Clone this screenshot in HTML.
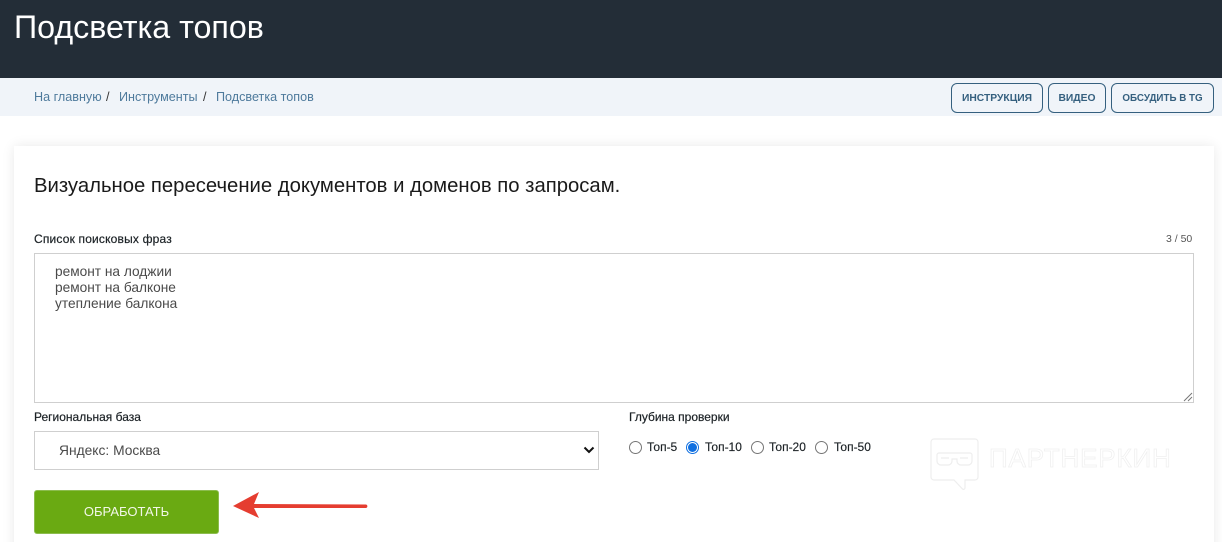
<!DOCTYPE html>
<html lang="ru"><head><meta charset="utf-8"><title>Подсветка топов</title>
<style>
*{box-sizing:border-box}
html,body{margin:0;padding:0;width:1222px;height:542px;overflow:hidden;background:#fff;font-family:"Liberation Sans",sans-serif}
#wrap{position:relative;width:1222px;height:542px;overflow:hidden}
.a{position:absolute;white-space:nowrap}
#hd{left:0;top:0;width:1222px;height:78px;background:#232d37}
#bc{left:0;top:78px;width:1222px;height:38px;background:#f0f4f9}
.bl{color:#4e7a9c;font-size:12.6px;top:90px;line-height:14px}
.btn{top:83px;height:30px;border:1px solid #35607f;border-radius:6px;color:#35607f;font-size:10.3px;font-weight:bold;text-align:center;line-height:29px;background:#f0f4f9}
#card{left:14px;top:146px;width:1200px;height:420px;background:#fff;box-shadow:0 0 12px rgba(0,0,0,.09)}
.lb{font-size:12px;color:#1c2226;line-height:14px;-webkit-text-stroke:.2px #1c2226}
.box{background:#fff;border:1px solid #cfcfcf}
.r{width:13px;height:13px;border:1px solid #767676;border-radius:50%;background:#fff;top:441px}
.rt{font-size:12px;color:#1c2226;top:440px;line-height:14px;-webkit-text-stroke:.15px #1c2226}
</style></head><body>
<div id="wrap">
<div class="a" id="hd"></div>
<div class="a" style="left:14px;top:9px;font-size:32.2px;line-height:37px;color:#fff">Подсветка топов</div>
<div class="a" id="bc"></div>
<div class="a bl" style="left:34px">На главную</div>
<div class="a bl" style="left:106px;color:#333">/</div>
<div class="a bl" style="left:119px">Инструменты</div>
<div class="a bl" style="left:203px;color:#333">/</div>
<div class="a bl" style="left:216px">Подсветка топов</div>
<div class="a btn" style="left:951px;width:92px">ИНСТРУКЦИЯ</div>
<div class="a btn" style="left:1048px;width:58px">ВИДЕО</div>
<div class="a btn" style="left:1111px;width:103px;font-size:9.8px">ОБСУДИТЬ В TG</div>
<div class="a" id="card"></div>
<div class="a" style="left:34px;top:174px;font-size:20.3px;line-height:24px;color:#1a1a1a">Визуальное пересечение документов и доменов по запросам.</div>
<div class="a lb" style="left:34px;top:232px;letter-spacing:.18px">Список поисковых фраз</div>
<div class="a" style="left:1166px;top:233px;font-size:10.5px;line-height:12px;color:#555">3 / 50</div>
<div class="a box" style="left:34px;top:253px;width:1160px;height:150px"></div>
<div class="a" style="left:55px;top:264px;font-size:13.7px;line-height:16px;color:#4a4a4a">ремонт на лоджии<br>ремонт на балконе<br>утепление балкона</div>
<svg class="a" style="left:1182px;top:391px" width="11" height="11" viewBox="0 0 11 11"><path d="M2 10 10 2M6 10 10 6" stroke="#777" stroke-width="1" fill="none"/></svg>
<div class="a lb" style="left:34px;top:410px">Региональная база</div>
<div class="a box" style="left:34px;top:431px;width:565px;height:39px"></div>
<div class="a" style="left:59px;top:443px;font-size:13.8px;line-height:16px;color:#4a4a4a">Яндекс: Москва</div>
<svg class="a" style="left:583px;top:446px" width="12" height="9" viewBox="0 0 12 9"><path d="M1.500 1.500 6 6l4.500-4.500" stroke="#111" stroke-width="2" fill="none"/></svg>
<div class="a lb" style="left:629px;top:410px">Глубина проверки</div>
<div class="a r" style="left:629px"></div>
<div class="a rt" style="left:647px">Топ-5</div>
<div class="a r" style="left:686px;border:1px solid #0f6fe0"></div>
<div class="a" style="left:688px;top:443px;width:9px;height:9px;border-radius:50%;background:#0f6fe0"></div>
<div class="a rt" style="left:705px">Топ-10</div>
<div class="a r" style="left:751px"></div>
<div class="a rt" style="left:769px">Топ-20</div>
<div class="a r" style="left:815px"></div>
<div class="a rt" style="left:834px">Топ-50</div>
<svg class="a" style="left:930px;top:438px" width="50" height="54" viewBox="0 0 50 54" fill="none" stroke="#eeeeee" stroke-width="1.200"><path d="M4 1h41a3 3 0 0 1 3 3v35a3 3 0 0 1-3 3H35v8a1.500 1.500 0 0 1-2.500 1L24 42H4a3 3 0 0 1-3-3V4a3 3 0 0 1 3-3z"/><path d="M9 15h31a2 2 0 0 1 2 2v6a4 4 0 0 1-4 4H31a4 4 0 0 1-4-4v-2h-5v2a4 4 0 0 1-4 4h-7a4 4 0 0 1-4-4v-6a2 2 0 0 1 2-2z"/><path d="M11 20h8M30 20h8"/></svg>
<div class="a" style="left:989px;top:443px;font-size:26px;line-height:30px;color:#fff;letter-spacing:.85px;-webkit-text-stroke:.8px #f0f0f0">ПАРТНЕРКИН</div>
<div class="a" style="left:34px;top:490px;width:185px;height:44px;background:#6aaa12;border:1px solid #8cbc4e;border-radius:3px;color:#f2f7e8;font-size:13px;text-align:center;line-height:42px">ОБРАБОТАТЬ</div>
<svg class="a" style="left:230px;top:487px" width="142" height="34" viewBox="0 0 142 34"><path d="M3 19 29 5l-5 12 112 .500a1.800 1.800 0 0 1 0 3.500L24 21l5 10z" fill="#e53d30"/></svg>
</div>
</body></html>
